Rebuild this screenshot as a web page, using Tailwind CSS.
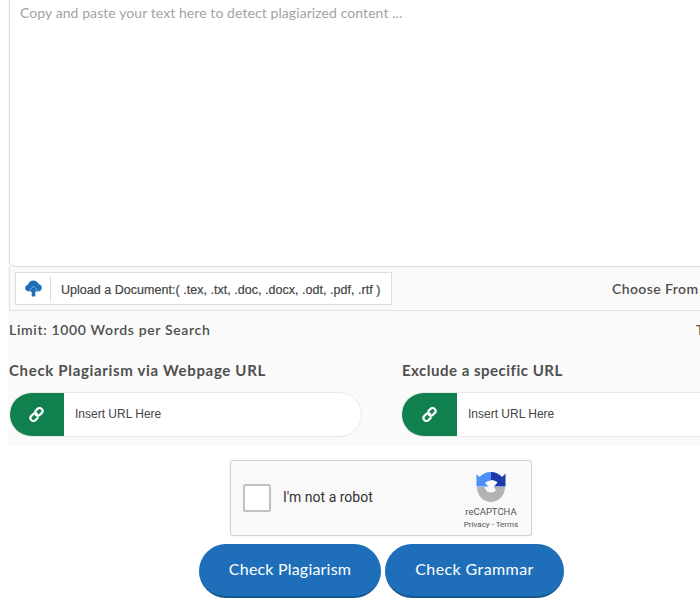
<!DOCTYPE html>
<html lang="en">
<head>
	<meta charset="utf-8"/>
	<meta name="viewport" content="width=device-width, initial-scale=1"/>
	<title>Plagiarism Checker</title>
	<script src="https://cdn.jsdelivr.net/npm/@tailwindcss/browser@4"></script>
</head>
<body class="bg-white overflow-hidden w-[700px] h-[600px] font-['Lato',sans-serif] text-[#4a4a4a]">
<main class="w-[700px] h-[600px] overflow-hidden">
	<section class="ml-2 w-[1000px] h-[446px] bg-[#fafafa]">
		<!-- text box -->
		<div class="ml-px h-[267px] bg-white border border-t-0 border-[#dedede] rounded-bl-md px-[10px] pt-[3px] text-[14px] leading-5 tracking-[0.08px] text-[#a3a3a3]">
			Copy and paste your text here to detect plagiarized content ...
		</div>
		<!-- upload bar -->
		<div class="ml-px h-[44px] border border-t-0 border-[#dedede] flex items-center pl-[5px]">
			<div class="flex items-center w-[377px] h-[33px] border border-[#dddddd] bg-white">
				<div class="w-[35px] h-[26px] border-r border-[#dddddd] flex items-center justify-center">
					<svg width="17" height="17" viewBox="0 0 17 17" fill="#1f6fb8">
						<path d="M4 11.500C1.800 11.500 .2 10 .2 8c0-1.700 1.200-3 2.800-3.300C3.600 2 5.800.4 8.300.4c2.400 0 4.500 1.400 5.300 3.600 1.800.2 3.200 1.700 3.200 3.700 0 2-1.600 3.800-3.600 3.800z"/>
						<path d="M8.500 6.300l5 5.300H10.300v5H6.700v-5H3.500z" stroke="#fff" stroke-width="1" paint-order="stroke"/>
					</svg>
				</div>
				<span class="ml-[10px] mt-[4px] font-['Liberation_Sans',sans-serif] text-[12.5px] tracking-[0.03px] text-[#444] [-webkit-text-stroke:0.2px_#444] whitespace-nowrap">Upload a Document:( .tex, .txt, .doc, .docx, .odt, .pdf, .rtf )</span>
			</div>
			<span class="ml-[220px] text-[14px] font-semibold tracking-[0.4px] text-[#4f4f4f] whitespace-nowrap">Choose From Cloud Storage</span>
		</div>
		<!-- limit row -->
		<div class="flex h-[41px] items-center pb-[5px] text-[14px] font-semibold tracking-[0.65px] text-[#4f4f4f]">
			<span class="ml-px w-[687px]">Limit: 1000 Words per Search</span>
			<span>Total Words: 0</span>
		</div>
		<!-- url inputs -->
		<div class="flex ml-px">
			<div class="w-[393px]">
				<h3 class="h-[40px] pt-[8px] text-[15px] leading-5 font-bold tracking-[0.67px] text-[#4f4f4f]">Check Plagiarism via Webpage URL</h3>
				<div class="flex w-[353px] h-[45px] bg-white border border-[#e8e8e8] rounded-full overflow-hidden">
					<div class="-m-px w-[55px] h-[45px] bg-[#11804f] flex items-center justify-center">
						<svg width="15" height="15" viewBox="0 0 16 16" fill="none" stroke="#fff" stroke-width="2.400" stroke-linecap="round">
							<path d="M6.800 4.300l2.300-2.300a2.800 2.800 0 0 1 4.200 0l.4.400a2.800 2.800 0 0 1 0 3.900l-2.300 2.300a2.800 2.800 0 0 1-4 0"/>
							<path d="M9.200 11.700l-2.300 2.300a2.800 2.800 0 0 1-4.200 0l-.4-.4a2.800 2.800 0 0 1 0-3.900l2.300-2.300a2.800 2.800 0 0 1 4 0"/>
						</svg>
					</div>
					<span class="ml-[12px] pb-[2px] self-center font-['Liberation_Sans',sans-serif] text-[12px] text-[#444]">Insert URL Here</span>
				</div>
			</div>
			<div class="w-[500px]">
				<h3 class="h-[40px] pt-[8px] text-[15px] leading-5 font-bold tracking-[0.5px] text-[#4f4f4f]">Exclude a specific URL</h3>
				<div class="-ml-px flex w-[353px] h-[45px] bg-white border border-[#e8e8e8] rounded-full overflow-hidden">
					<div class="-m-px w-[56px] h-[45px] bg-[#11804f] flex items-center justify-center">
						<svg width="15" height="15" viewBox="0 0 16 16" fill="none" stroke="#fff" stroke-width="2.400" stroke-linecap="round">
							<path d="M6.800 4.300l2.300-2.300a2.800 2.800 0 0 1 4.200 0l.4.400a2.800 2.800 0 0 1 0 3.900l-2.300 2.300a2.800 2.800 0 0 1-4 0"/>
							<path d="M9.200 11.700l-2.300 2.300a2.800 2.800 0 0 1-4.200 0l-.4-.4a2.800 2.800 0 0 1 0-3.900l2.300-2.300a2.800 2.800 0 0 1 4 0"/>
						</svg>
					</div>
					<span class="ml-[12px] pb-[2px] self-center font-['Liberation_Sans',sans-serif] text-[12px] text-[#444]">Insert URL Here</span>
				</div>
			</div>
		</div>
	</section>
	<!-- captcha -->
	<div class="mt-[14px] ml-[230px] w-[302px] h-[76px] bg-[#f9f9f9] border border-[#d3d3d3] rounded-[3px] shadow-[0_0_3px_rgba(0,0,0,0.08)] flex items-center font-['Roboto',sans-serif]">
		<div class="ml-[12px] w-[28px] h-[28px] bg-white border-2 border-[#c1c1c1] rounded-[2px]"></div>
		<span class="ml-[12px] mb-[2px] text-[14px] text-[#333]">I'm not a robot</span>
		<div class="ml-auto w-[70px] mr-[5px] flex flex-col items-center pt-[4px]">
			<svg width="32" height="32" viewBox="0 0 32 32">
				<path d="M2 16h8c0 3.500 2.500 5.500 6 5.500 2 0 4-.8 5-2.500l-2.500-3H30c0 8.500-6.500 15-14 15S2 24.500 2 16z" fill="#b3b3b3"/>
				<path d="M16 1C11 1 7 3 4.500 6L1.500 3v12.500h12L10 12c1.500-1.500 3.500-2.500 6-2.500z" fill="#4a90f5"/>
				<path d="M16 1c4.500 0 8.500 2 11 5l3.500-3.500v13H19l3.500-4c-1.500-1.500-4-2.500-6.500-2.500z" fill="#1c3aa9"/>
			</svg>
			<span class="mt-[3px] text-[9.500px] leading-[12px] text-[#555]">reCAPTCHA</span>
			<span class="mt-[1px] text-[8px] leading-[11px] text-[#555] whitespace-nowrap">Privacy - Terms</span>
		</div>
	</div>
	<!-- actions -->
	<div class="mt-[8px] ml-[199px] flex gap-[4px] font-['Lato',sans-serif]">
		<button class="w-[182px] h-[54px] pb-[2px] rounded-full bg-[#1e6eb9] border-b-2 border-[#15568f] text-white text-[16px] tracking-[0.2px]">Check Plagiarism</button>
		<button class="w-[179px] h-[54px] pb-[2px] rounded-full bg-[#1e6eb9] border-b-2 border-[#15568f] text-white text-[16px] tracking-[0.4px]">Check Grammar</button>
	</div>
</main>
</body>
</html>
